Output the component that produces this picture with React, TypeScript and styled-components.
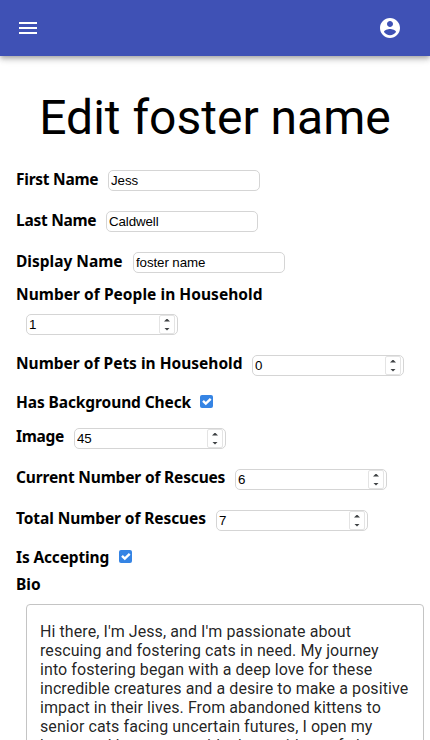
import React from "react";
import styled, { createGlobalStyle } from "styled-components";

const GlobalStyle = createGlobalStyle`
  *, *::before, *::after { box-sizing: border-box; }
  html, body { margin: 0; height: 740px; overflow: hidden; background: #fff; }
`;

const Page = styled.div`
  height: 740px;
  overflow: hidden;
  color: #000;
`;

const AppBar = styled.header`
  display: flex;
  align-items: center;
  justify-content: space-between;
  height: 56px;
  padding: 0 28px 0 16px;
  background: #3f51b5;
  color: #fff;
  box-shadow: 0 2px 4px -1px rgba(0, 0, 0, 0.2), 0 4px 5px 0 rgba(0, 0, 0, 0.14),
    0 1px 10px 0 rgba(0, 0, 0, 0.12);
`;

const IconButton = styled.button`
  display: flex;
  padding: 0;
  border: 0;
  background: none;
  color: inherit;
`;

const Icon = styled.svg`
  width: 24px;
  height: 24px;
  fill: currentColor;
`;

const Title = styled.h1`
  margin: 34px 0 14px;
  font: 400 48px/56px Roboto, sans-serif;
  text-align: center;
  white-space: nowrap;
`;

const Form = styled.form`
  display: flex;
  flex-direction: column;
  padding: 0 6px 0 16px;
`;

const Row = styled.div<{ $height: number }>`
  display: flex;
  align-items: center;
  flex: none;
  height: ${(p) => p.$height}px;
`;

const Label = styled.label<{ $width?: number; $tracking?: number; $lift?: number }>`
  flex: none;
  width: ${(p) => (p.$width ? `${p.$width}px` : "auto")};
  margin-bottom: ${(p) => p.$lift ?? 0}px;
  font: 700 15.5px/22px "Noto Sans", sans-serif;
  letter-spacing: ${(p) => p.$tracking ?? 0}px;
  white-space: nowrap;
`;

const Field = styled.div`
  display: flex;
  flex: none;
  width: 152px;
  height: 21px;
  margin-left: 10px;
  border: 1px solid #d5d5d5;
  border-radius: 5px;
  background: #fff;
`;

const Input = styled.input`
  flex: 1;
  min-width: 0;
  padding: 1px 2px;
  border: 0;
  outline: 0;
  background: none;
  color: #000;
  font: 13.333px "Liberation Sans", sans-serif;
  letter-spacing: -0.1px;
`;

const Spinner = styled.span`
  display: flex;
  flex-direction: column;
  align-items: center;
  justify-content: center;
  gap: 6px;
  width: 16px;
  margin-right: 2px;
  border: 1px solid #e4e4e4;
  border-radius: 2px;
`;

const Arrow = styled.i<{ $down?: boolean }>`
  width: 6px;
  height: 3px;
  background: #3d4043;
  clip-path: ${(p) => (p.$down ? "polygon(0 0, 100% 0, 50% 100%)" : "polygon(50% 0, 100% 100%, 0 100%)")};
`;

const CheckIcon = styled.svg`
  width: 13px;
  height: 13px;
  margin: 0 0 2px 9px;
`;

const Bio = styled.div`
  height: 300px;
  margin: 9px 0 0 10px;
  padding: 17px 13px;
  border: 1px solid #c4c4c4;
  border-radius: 4px;
  color: rgba(0, 0, 0, 0.87);
  font: 400 16px/19px Roboto, sans-serif;
  letter-spacing: 0.08px;
  white-space: pre;
`;

type FieldProps = {
  label: string;
  value: string;
  width: number;
  tracking?: number;
  number?: boolean;
};

function Control({ label, value, number }: Pick<FieldProps, "label" | "value" | "number">) {
  return (
    <Field>
      <Input aria-label={label} defaultValue={value} />
      {number && (
        <Spinner>
          <Arrow />
          <Arrow $down />
        </Spinner>
      )}
    </Field>
  );
}

function FieldRow({ width, tracking, ...field }: FieldProps) {
  return (
    <Row $height={41}>
      <Label $width={width} $tracking={tracking} $lift={field.number ? 6 : 3}>
        {field.label}
      </Label>
      <Control {...field} />
    </Row>
  );
}

function CheckRow({ label, width, tracking }: { label: string; width: number; tracking: number }) {
  return (
    <Row $height={32}>
      <Label $width={width} $tracking={tracking}>
        {label}
      </Label>
      <CheckIcon viewBox="0 0 13 13" role="checkbox" aria-checked="true" aria-label={label}>
        <rect width="13" height="13" rx="2" fill="#3584e4" />
        <path d="M3 5.8 5.8 8.6 10.7 3.8" fill="none" stroke="#fff" strokeWidth="2.4" />
      </CheckIcon>
    </Row>
  );
}

const bio = [
  "Hi there, I'm Jess, and I'm passionate about",
  "rescuing and fostering cats in need. My journey",
  "into fostering began with a deep love for these",
  "incredible creatures and a desire to make a positive",
  "impact in their lives. From abandoned kittens to",
  "senior cats facing uncertain futures, I open my",
  "home and heart to provide them with a safe haven",
].join("\n");

export default function App() {
  return (
    <>
      <GlobalStyle />
      <Page>
        <AppBar>
          <IconButton aria-label="Menu">
            <Icon viewBox="0 0 24 24">
              <path d="M3 18h18v-2H3v2zm0-5h18v-2H3v2zm0-7v2h18V6H3z" />
            </Icon>
          </IconButton>
          <IconButton aria-label="Account">
            <Icon viewBox="0 0 24 24">
              <path d="M12 2C6.48 2 2 6.48 2 12s4.48 10 10 10 10-4.48 10-10S17.52 2 12 2zm0 3c1.66 0 3 1.34 3 3s-1.34 3-3 3-3-1.34-3-3 1.34-3 3-3zm0 14.2c-2.5 0-4.71-1.28-6-3.22.03-1.99 4-3.08 6-3.08 1.99 0 5.97 1.09 6 3.08-1.29 1.94-3.5 3.22-6 3.22z" />
            </Icon>
          </IconButton>
        </AppBar>
        <Title>Edit foster name</Title>
        <Form>
          <FieldRow label="First Name" value="Jess" width={82} tracking={-0.25} />
          <FieldRow label="Last Name" value="Caldwell" width={80} tracking={-0.27} />
          <FieldRow label="Display Name" value="foster name" width={107} />
          <Row $height={21}>
            <Label $tracking={0.04}>Number of People in Household</Label>
          </Row>
          <Row $height={41}>
            <Control label="Number of People in Household" value="1" number />
          </Row>
          <FieldRow label="Number of Pets in Household" value="0" width={226} number />
          <CheckRow label="Has Background Check" width={175} tracking={-0.1} />
          <FieldRow label="Image" value="45" width={48} tracking={-0.3} number />
          <FieldRow label="Current Number of Rescues" value="6" width={209} tracking={-0.17} number />
          <FieldRow label="Total Number of Rescues" value="7" width={190} tracking={-0.09} number />
          <CheckRow label="Is Accepting" width={94} tracking={-0.15} />
          <Row $height={22}>
            <Label>Bio</Label>
          </Row>
          <Bio>{bio}</Bio>
        </Form>
      </Page>
    </>
  );
}
